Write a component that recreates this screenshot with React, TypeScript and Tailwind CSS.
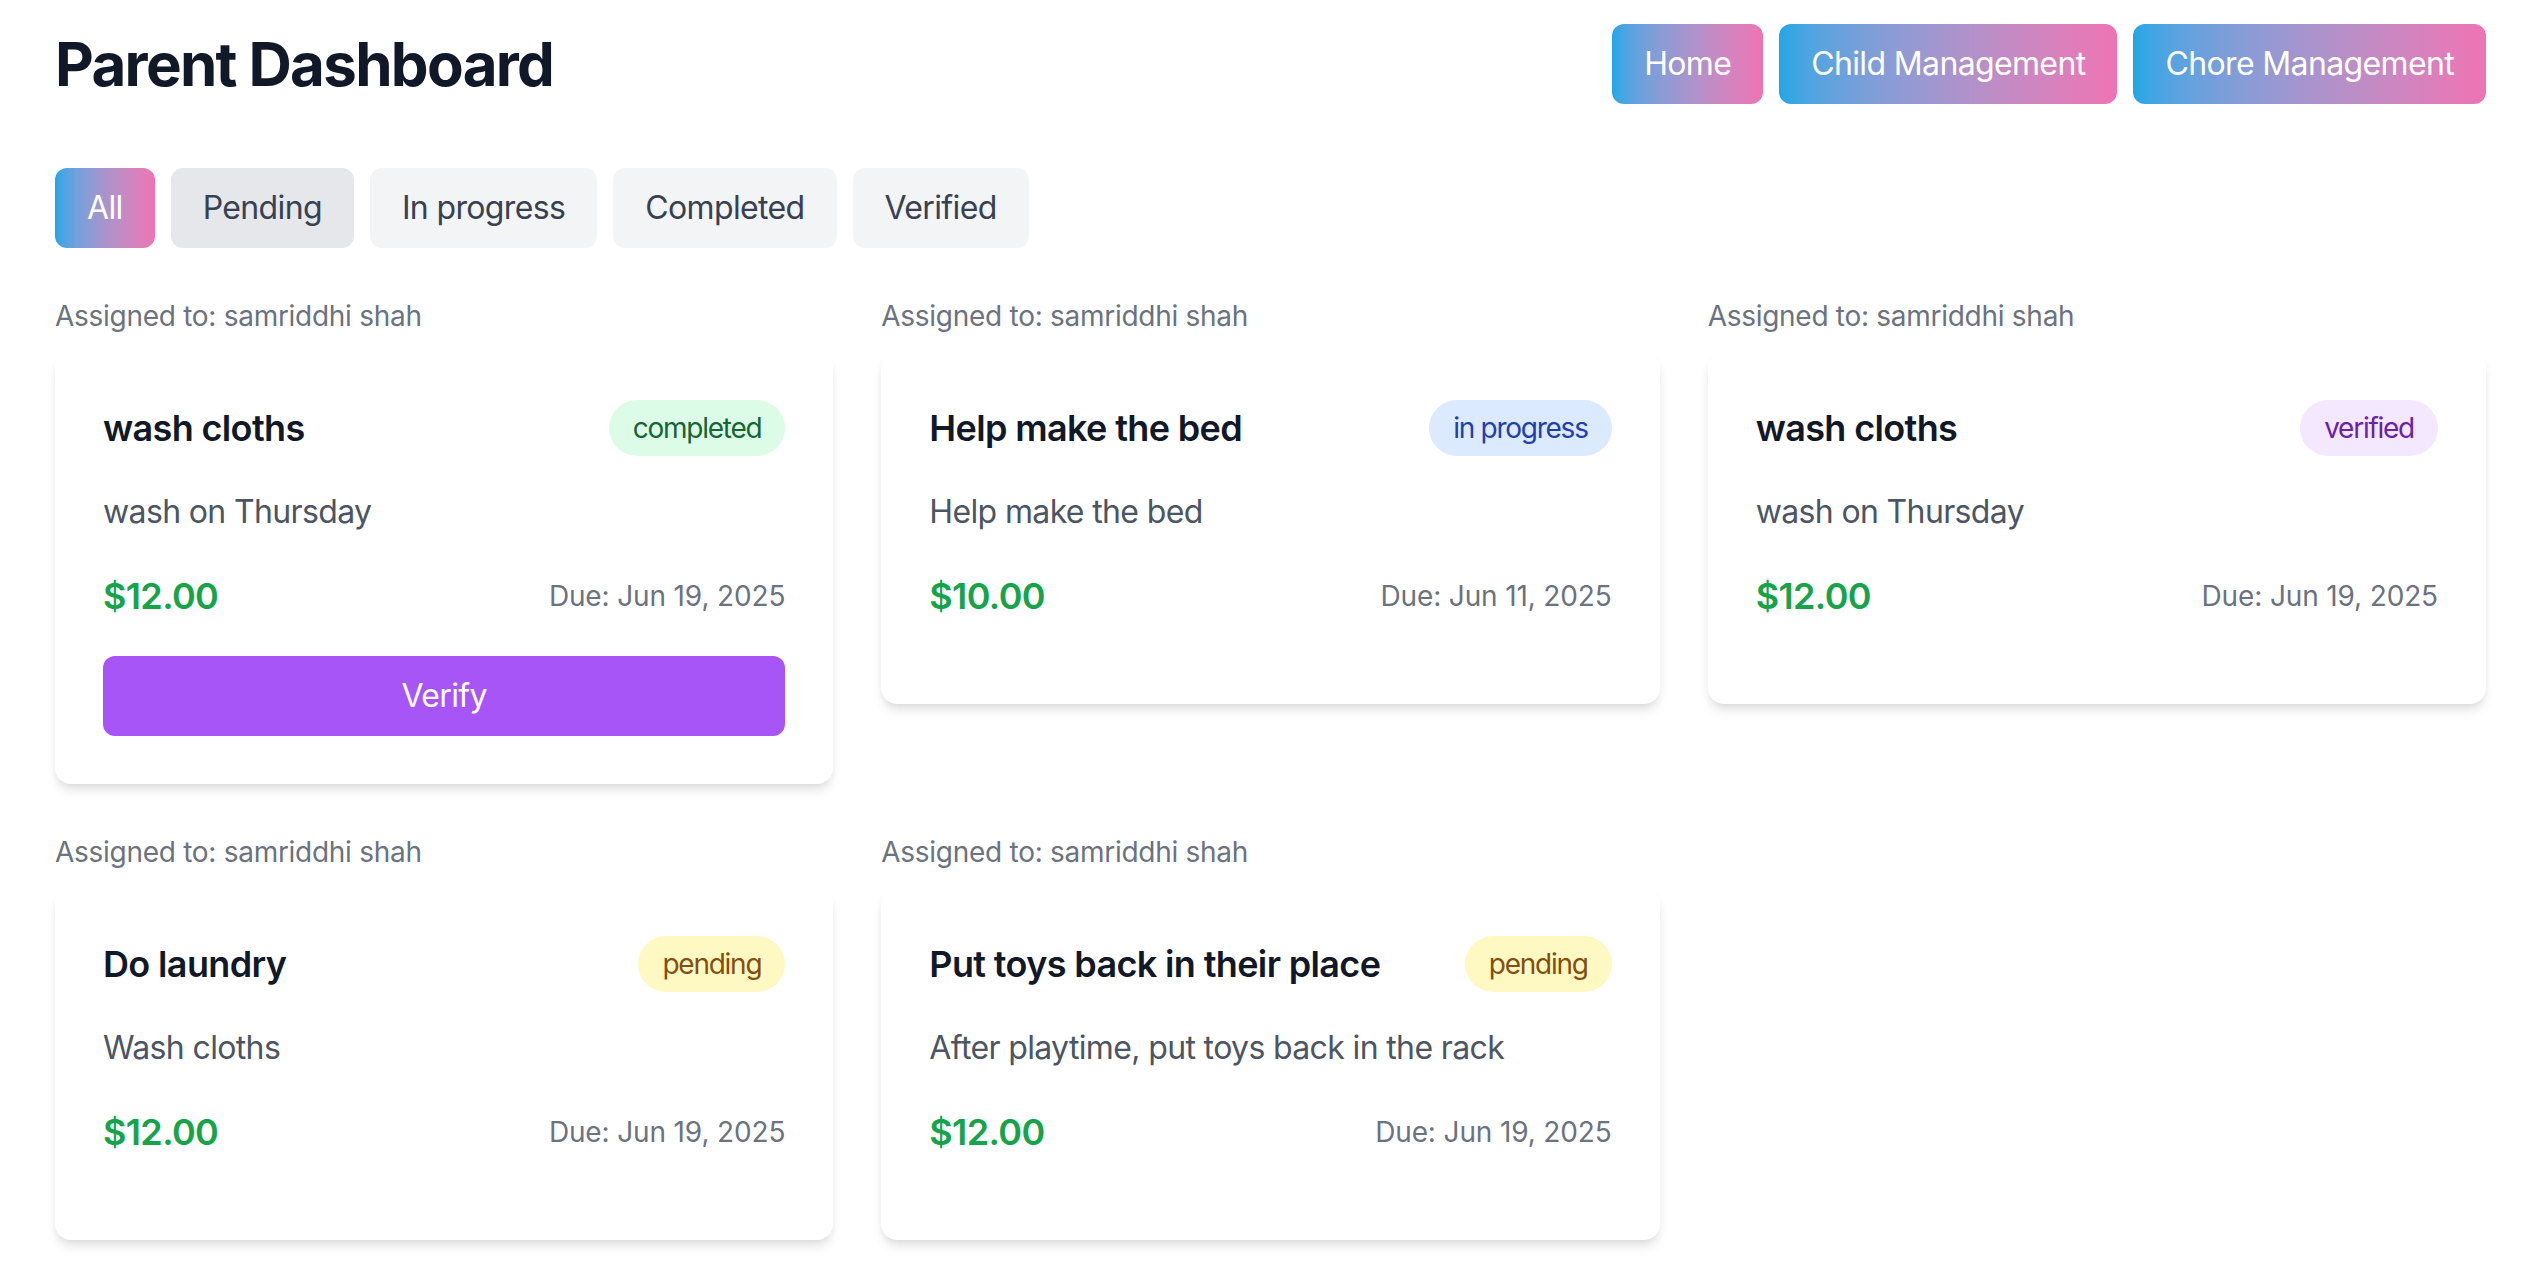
import React, { useState } from 'react';

type Status = 'pending' | 'in progress' | 'completed' | 'verified';

type Chore = {
  id: number;
  title: string;
  description: string;
  reward: string;
  due: string;
  status: Status;
  assignee: string;
};

const chores: Chore[] = [
  { id: 1, title: 'wash cloths', description: 'wash on Thursday', reward: '$12.00', due: 'Jun 19, 2025', status: 'completed', assignee: 'samriddhi shah' },
  { id: 2, title: 'Help make the bed', description: 'Help make the bed', reward: '$10.00', due: 'Jun 11, 2025', status: 'in progress', assignee: 'samriddhi shah' },
  { id: 3, title: 'wash cloths', description: 'wash on Thursday', reward: '$12.00', due: 'Jun 19, 2025', status: 'verified', assignee: 'samriddhi shah' },
  { id: 4, title: 'Do laundry', description: 'Wash cloths', reward: '$12.00', due: 'Jun 19, 2025', status: 'pending', assignee: 'samriddhi shah' },
  { id: 5, title: 'Put toys back in their place', description: 'After playtime, put toys back in the rack', reward: '$12.00', due: 'Jun 19, 2025', status: 'pending', assignee: 'samriddhi shah' },
];

const badgeStyles: Record<Status, string> = {
  pending: 'bg-[#fef9c3] text-[#854d0e]',
  'in progress': 'bg-[#dbeafe] text-[#1e40af]',
  completed: 'bg-[#dcfce7] text-[#166534]',
  verified: 'bg-[#f3e8ff] text-[#6b21a8]',
};

const filters = ['All', 'Pending', 'In progress', 'Completed', 'Verified'];

const ChoreCard = ({ chore }: { chore: Chore }) => (
  <div>
    <p className="text-sm text-[#6b7280] mb-2 tracking-[-0.01em]">Assigned to: {chore.assignee}</p>
    <div className="bg-white rounded-lg shadow-md p-6">
      <div className="flex justify-between items-center mb-4">
        <h3 className="text-lg font-semibold text-[#111827]">{chore.title}</h3>
        <span className={`px-3 py-1 rounded-full text-sm tracking-[-0.045em] ${badgeStyles[chore.status]}`}>
          {chore.status}
        </span>
      </div>
      <p className="text-[#4b5563] mb-4">{chore.description}</p>
      <div className="flex justify-between items-center mb-4">
        <span className="text-lg font-semibold text-[#16a34a]">{chore.reward}</span>
        <span className="text-sm text-[#6b7280] tracking-[-0.005em]">Due: {chore.due}</span>
      </div>
      {chore.status === 'completed' && (
        <button className="w-full bg-[#a855f7] text-white py-2 rounded-md">Verify</button>
      )}
    </div>
  </div>
);

const App = () => {
  const [active, setActive] = useState('All');

  return (
    <div className="[zoom:2] bg-white font-[Inter,sans-serif] tracking-[-0.02em] pl-[27.5px] pr-[20px] pt-3 pb-8">
      {/* Header */}
      <div className="flex justify-between items-center mb-8">
        <h1 className="text-3xl font-bold text-[#111827] tracking-[-0.028em]">Parent Dashboard</h1>
        <div className="flex gap-2">
          {['Home', 'Child Management', 'Chore Management'].map((label) => (
            <button
              key={label}
              className="px-4 py-2 rounded-md text-white bg-linear-to-r from-[#1fa7e6] to-[#ef73b3]"
            >
              {label}
            </button>
          ))}
        </div>
      </div>

      {/* Filters */}
      <div className="flex gap-2 mb-6">
        {filters.map((f) => (
          <button
            key={f}
            onClick={() => setActive(f)}
            className={
              f === active
                ? 'px-4 py-2 rounded-md text-white bg-linear-to-r from-[#1fa7e6] to-[#ef73b3]'
                : f === 'Pending'
                ? 'px-4 py-2 rounded-md text-[#374151] bg-[#e5e7eb]'
                : 'px-4 py-2 rounded-md text-[#374151] bg-[#f3f4f6]'
            }
          >
            {f}
          </button>
        ))}
      </div>

      {/* Chore grid */}
      <div className="grid grid-cols-3 gap-6">
        {chores.map((c) => (
          <ChoreCard key={c.id} chore={c} />
        ))}
      </div>
    </div>
  );
};

export default App;
